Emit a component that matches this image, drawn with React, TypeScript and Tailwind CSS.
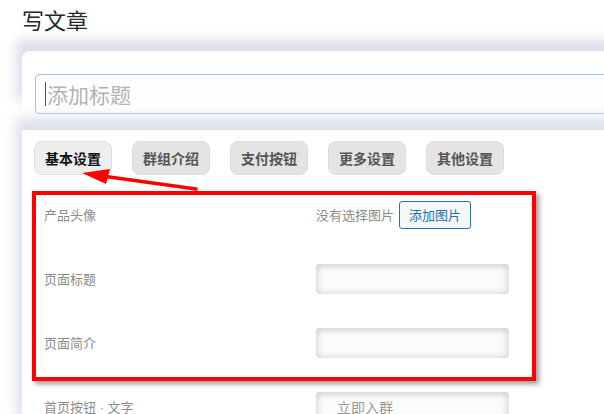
import React from 'react';

const tabs = ['基本设置', '群组介绍', '支付按钮', '更多设置', '其他设置'];

const FieldBox: React.FC<{ text?: string }> = ({ text }) => (
  <div className="w-[193px] h-[30px] rounded-[4px] bg-[#fbfbfb] shadow-[inset_0_1px_8px_rgba(0,0,0,0.22)] flex items-center pl-[21px] text-[14px] text-[#999]">
    {text}
  </div>
);

export default function App() {
  return (
    <div
      className="relative w-[604px] h-[414px] overflow-hidden bg-white"
      style={{ fontFamily: '"Noto Sans CJK SC", "Noto Sans", sans-serif' }}
    >
      {/* Page heading */}
      <h1 className="pl-[22px] pt-[4px] text-[22px] leading-[30px] text-[#23282d]">写文章</h1>

      <div className="pl-[22px] pt-[17px] w-[900px]">
        {/* Title box */}
        <div className="w-[800px] h-[62px] bg-white rounded-tl-[8px] pt-[23px] pl-[13px] shadow-[-6px_-12px_12px_0_#dedeed]">
          <div className="w-[780px] h-[40px] rounded-[4px] border border-[#9ec2e6] bg-[#fdfdfd] flex items-center pl-[9px]">
            <span className="w-px h-[24px] bg-[#555]" />
            <span className="ml-px text-[21px] text-[#b0b3b6] leading-none">添加标题</span>
          </div>
        </div>

        {/* Settings box */}
        <div className="mt-[17px] w-[800px] h-[300px] bg-white pt-[11px] shadow-[-6px_-12px_12px_0_#dedeed]">
          <div className="ml-[12px] flex gap-[20px]">
            {tabs.map((t, i) => (
              <div
                key={t}
                className={`w-[78px] h-[34px] rounded-[8px] border flex items-center justify-center text-[14px] font-bold ${
                  i === 0 ? 'bg-[#eeeeee] border-[#e0e0e0] text-[#111]' : 'bg-[#e4e4e4] border-[#dcdcdc] text-[#555]'
                }`}
              >
                {t}
              </div>
            ))}
          </div>

          {/* Highlighted group */}
          <div className="ml-[10px] mt-[16px] w-[504px] h-[190px] border-4 border-[#ff0000] shadow-[3px_3px_5px_rgba(0,0,0,0.4)] pl-[8px] text-[13px] text-[#8c8c8c]">
            <div className="h-[40px] flex items-center">
              <span className="w-[272px]">产品头像</span>
              <span className="text-[#8a8a8a]">没有选择图片</span>
              <span className="ml-[5px] h-[28px] px-[9px] flex items-center rounded-[3px] border border-[#2271b1] bg-[#f6f7f7] text-[#2271b1] text-[13px]">
                添加图片
              </span>
            </div>
            <div className="mt-[12px] h-[64px] flex items-center">
              <span className="w-[272px]">页面标题</span>
              <FieldBox />
            </div>
            <div className="h-[64px] flex items-center">
              <span className="w-[272px]">页面简介</span>
              <FieldBox />
            </div>
          </div>

          <div className="mt-[11px] pl-[22px] flex items-start text-[13px] text-[#8c8c8c]">
            <span className="w-[272px] pt-[5px]">
              首页按钮<span style={{ fontFamily: '"Liberation Sans", sans-serif' }}> · </span>文字
            </span>
            <FieldBox text="立即入群" />
          </div>
        </div>
      </div>

      {/* Annotation arrow */}
      <svg className="absolute left-0 top-0 pointer-events-none" width="604" height="414">
        <line x1="196" y1="189" x2="102" y2="176" stroke="#ff0000" strokeWidth="3.5" strokeLinecap="round" />
        <polygon points="82,173 110,169 106,184" fill="#ff0000" />
      </svg>
    </div>
  );
}
